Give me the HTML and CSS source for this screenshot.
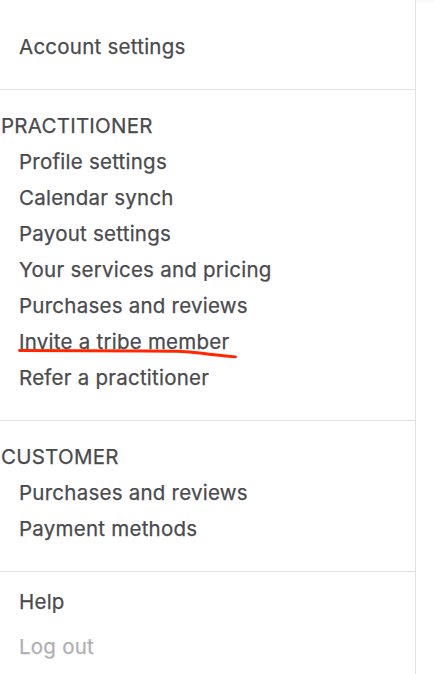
FILE: index.html
```html
<!DOCTYPE html>
<html lang="en">
<head>
<meta charset="utf-8">
<title>Account menu</title>
<link rel="stylesheet" href="styles.css">
</head>
<body>
<div class="page">
<nav class="menu">
  <section class="group group-account">
    <a class="item">Account settings</a>
  </section>
  <section class="group group-practitioner">
    <h2 class="heading">PRACTITIONER</h2>
    <a class="item">Profile settings</a>
    <a class="item">Calendar synch</a>
    <a class="item">Payout settings</a>
    <a class="item">Your services and pricing</a>
    <a class="item">Purchases and reviews</a>
    <a class="item marked">Invite a tribe member
      <svg class="underline" width="226" height="16" viewBox="0 0 226 16"><path d="M4.500 6.500C50 7 90 7 130 7C160 7 168 7 187 9.300Q200 11.200 220.500 12.900" fill="none" stroke="#ff2600" stroke-width="2.900" stroke-linecap="round"/></svg>
    </a>
    <a class="item">Refer a practitioner</a>
  </section>
  <section class="group group-customer">
    <h2 class="heading">CUSTOMER</h2>
    <a class="item">Purchases and reviews</a>
    <a class="item">Payment methods</a>
  </section>
  <section class="group-footer">
    <a class="item">Help</a>
    <a class="item logout">Log out</a>
  </section>
</nav>
<div class="side"></div>
</div>
</body>
</html>
```

FILE: styles.css
```css
* { box-sizing: border-box; }
body { margin: 0; background: #fff; color: #4a4a4e; font: 400 20.5px/36px Inter, sans-serif; letter-spacing: 0.24px; -webkit-text-stroke: 0.25px currentColor; overflow: hidden; }
.page { display: flex; height: 674px; }
.menu { width: 416px; border-right: 1px solid #e2e2e2; }
.side { flex: 1; background: linear-gradient(#f8f8f8, #fff 5px); }
.group { border-bottom: 1px solid #e2e2e2; }
.group-account { padding-top: 29px; height: 90px; }
.group-practitioner { padding-top: 18px; height: 331px; }
.group-customer { padding-top: 18px; height: 151px; }
.group-footer { padding-top: 12px; }
.heading { margin: 0; padding-left: 1px; font: inherit; }
.item { display: block; height: 36px; padding-left: 19px; white-space: nowrap; }
.marked { position: relative; }
.underline { position: absolute; left: 15px; top: 20px; }
.logout { margin-top: 9px; color: #b0b0b3; }
```
